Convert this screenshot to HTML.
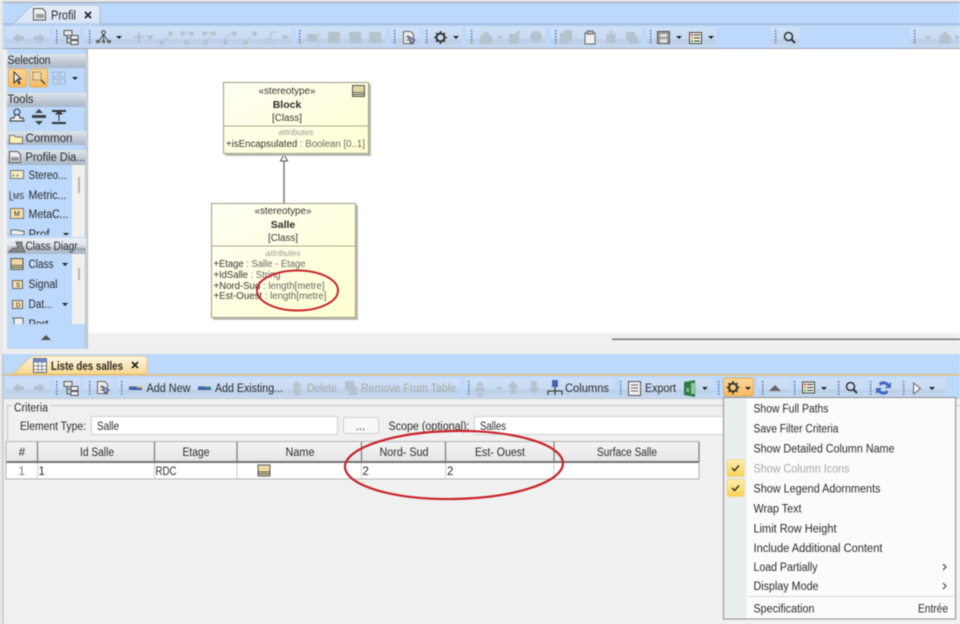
<!DOCTYPE html>
<html><head><meta charset="utf-8"><title>Profil</title>
<style>
html,body{margin:0;padding:0;background:#f0f0f0;width:960px;height:624px;overflow:hidden}
svg{display:block;filter:blur(.5px)}
text{font-family:"Liberation Sans",sans-serif;font-size:11.5px;fill:#2a2a2a}
.d{fill:#a8a8a8}
.s{font-size:10px;fill:#333}
.m{font-size:11.5px}
</style></head><body>
<svg width="960" height="624" viewBox="0 0 960 624" xmlns="http://www.w3.org/2000/svg">
<defs>
<linearGradient id="seg" x1="0" y1="0" x2="0" y2="1"><stop offset="0" stop-color="#cfe0f6"/><stop offset=".55" stop-color="#c8dbf3"/><stop offset=".6" stop-color="#bccee4"/><stop offset="1" stop-color="#c6daf4"/></linearGradient>
<linearGradient id="hdr" x1="0" y1="0" x2="0" y2="1"><stop offset="0" stop-color="#dfe4ea"/><stop offset="1" stop-color="#a9b7c8"/></linearGradient>
<linearGradient id="tab1" x1="0" y1="0" x2="0" y2="1"><stop offset="0" stop-color="#e6eef8"/><stop offset="1" stop-color="#d5e4f7"/></linearGradient>
<linearGradient id="tab2" x1="0" y1="0" x2="0" y2="1"><stop offset="0" stop-color="#fdf6e6"/><stop offset="1" stop-color="#f9d88e"/></linearGradient>
<linearGradient id="org" x1="0" y1="0" x2="0" y2="1"><stop offset="0" stop-color="#fdd79a"/><stop offset="1" stop-color="#f8b95f"/></linearGradient>
<linearGradient id="chk" x1="0" y1="0" x2="0" y2="1"><stop offset="0" stop-color="#fff0b0"/><stop offset="1" stop-color="#fdd050"/></linearGradient>
<linearGradient id="cls" x1="0" y1="0" x2="1" y2="1"><stop offset="0" stop-color="#fffff4"/><stop offset="1" stop-color="#ffffd0"/></linearGradient>
<linearGradient id="th" x1="0" y1="0" x2="0" y2="1"><stop offset="0" stop-color="#f4f4f4"/><stop offset="1" stop-color="#e6e6e6"/></linearGradient>
<g id="grip" fill="#4a78b8"><rect x="0" y="0" width="1.4" height="1.6"/><rect x="0" y="3" width="1.4" height="1.6"/><rect x="0" y="6" width="1.4" height="1.6"/><rect x="0" y="9" width="1.4" height="1.6"/><rect x="0" y="12" width="1.4" height="1.6"/></g>
<path id="dd" d="M0 0h6l-3 3z" fill="#222"/>
<path id="ddg" d="M0 0h6l-3 3z" fill="#b0bac5"/>
<g id="arrows" fill="#b4bfcb"><path d="M0 6l6-5v3h5v4h-5v3z"/><path d="M32 6l-6-5v3h-5v4h5v3z"/></g>
<g id="tree" fill="none" stroke="#555"><rect x="0" y=".5" width="8" height="5" fill="#e8e8e8"/><rect x="7" y="5.5" width="7" height="4" fill="#eee"/><rect x="7" y="10.5" width="7" height="4" fill="#eee"/><path d="M3 6v7h4M3 8h4"/></g>
<g id="gear"><circle cx="6.5" cy="6.5" r="4" fill="none" stroke="#333" stroke-width="2"/><path d="M6.500 0v2M6.500 11v2M0 6.500h2M11 6.500h2M2 2l1.500 1.500M9.500 9.500l1.500 1.500M11 2l-1.500 1.500M3.500 9.500l-1.500 1.500" stroke="#333" stroke-width="1.500"/></g>
<g id="list"><rect x=".5" y=".5" width="12" height="11" fill="#f4f4ea" stroke="#444"/><path d="M5 3h6M5 6h6M5 9h6" stroke="#333"/><rect x="2" y="2" width="2" height="2" fill="#d44"/><rect x="2" y="5" width="2" height="2" fill="#da3"/><rect x="2" y="8" width="2" height="2" fill="#6a4"/></g>
<g id="lens"><circle cx="5.5" cy="5.5" r="4" fill="none" stroke="#333" stroke-width="1.5"/><path d="M8.5 8.5l3.5 3.5" stroke="#333" stroke-width="2"/></g>
<g id="doc"><path d="M.5.5h7l3 3v9h-10z" fill="#eee" stroke="#666"/><path d="M3 6l4 0M3 9h4" stroke="#666"/><path d="M5 5l7 4-4 4z" fill="#8aa6c8" stroke="#556"/></g>
<g id="clsicon"><rect x=".5" y=".5" width="12" height="11" fill="#f0d9a0" stroke="#555"/><path d="M1 7.5h11M1 9.5h11" stroke="#555"/></g>
</defs>

<!-- top region -->
<rect x="0" y="0" width="960" height="2" fill="#e4e4e4"/>
<rect x="0" y="2" width="960" height="1.5" fill="#9aa3ad"/>
<rect x="0" y="0" width="3" height="350" fill="#e8e8e8"/>
<rect x="3" y="3" width="957" height="22" fill="#bcd8fb"/>
<path d="M12 24C20 20 28 5 36 5H96Q100 5 100 9V24Z" fill="url(#tab1)" stroke="#a5b6ca" stroke-width=".8"/>
<rect x="3" y="23.5" width="9" height="1.2" fill="#9db0c6"/><rect x="100" y="23.5" width="860" height="1.2" fill="#9db0c6"/>
<path d="M33.500 8.500h9l3 3v8.500h-12z" fill="#eee" stroke="#555"/><rect x="36" y="14" width="8" height="4" fill="#999"/>
<text x="51" y="19.500" style="font-size:12.500px" textLength="25" lengthAdjust="spacingAndGlyphs">Profil</text>
<path d="M85 12l6 6M91 12l-6 6" stroke="#222" stroke-width="1.800"/>

<rect x="3" y="25" width="957" height="24" fill="#bcd8fb"/>
<rect x="3" y="48" width="957" height="1.500" fill="#9ba5b0"/>
<g fill="url(#seg)">
<rect x="6" y="27" width="44" height="21"/><rect x="53" y="27" width="27" height="21"/><rect x="84" y="27" width="208" height="21"/><rect x="295" y="27" width="91" height="21"/><rect x="391" y="27" width="29" height="21"/><rect x="423" y="27" width="39" height="21"/><rect x="466" y="27" width="80" height="21"/><rect x="551" y="27" width="90" height="21"/><rect x="646" y="27" width="70" height="21"/><rect x="771" y="27" width="29" height="21"/><rect x="910" y="27" width="50" height="21"/>
</g>
<use href="#grip" x="56" y="30"/><use href="#grip" x="89" y="30"/><use href="#grip" x="299" y="30"/><use href="#grip" x="394" y="30"/><use href="#grip" x="426" y="30"/><use href="#grip" x="471" y="30"/><use href="#grip" x="555" y="30"/><use href="#grip" x="650" y="30"/><use href="#grip" x="775" y="30"/><use href="#grip" x="914" y="30"/>
<use href="#arrows" x="13" y="32"/>
<use href="#tree" x="64" y="30"/>
<g fill="none" stroke="#444"><circle cx="103.500" cy="32.500" r="1.800"/><path d="M103.500 34.500l-5 7M103.500 34.500l5 7M103.500 34.500v7"/></g><g fill="#666"><rect x="96" y="40" width="4" height="3"/><rect x="102" y="40" width="3" height="3"/><rect x="107" y="40" width="4" height="3"/></g>
<use href="#dd" x="116" y="36"/>
<g stroke="#b6c0cb" fill="#b6c0cb">
<path d="M134 37h10M139 32v11" stroke-width="2"/><use href="#ddg" x="147" y="36"/>
<path d="M161 43l10-9" /><rect x="160" y="41" width="3" height="3"/><rect x="169" y="32" width="3" height="3"/>
<path d="M183 33h8" fill="none"/><rect x="181" y="32" width="3" height="3"/><rect x="190" y="32" width="3" height="3"/><rect x="185" y="41" width="3" height="3"/>
<path d="M204 33h9l-7 9" fill="none"/><rect x="203" y="32" width="3" height="3"/><rect x="212" y="32" width="3" height="3"/><rect x="204" y="41" width="3" height="3"/>
<path d="M225 42q0-8 9-9" fill="none"/><rect x="224" y="41" width="3" height="3"/><rect x="233" y="32" width="3" height="3"/>
<path d="M245 43l10-10" stroke-dasharray="3 2"/><rect x="244" y="41" width="3" height="3"/><rect x="253" y="32" width="3" height="3"/>
<path d="M265 43h10M265 39h6v-7h6" fill="none"/><use href="#ddg" x="282" y="36"/>
</g>
<g fill="#b6c2ce"><rect x="307" y="34" width="10" height="8"/><path d="M319 31v14" stroke="#b6c2ce" stroke-dasharray="2 2"/><rect x="328" y="32" width="12" height="11"/><rect x="349" y="32" width="12" height="11"/><rect x="369" y="32" width="12" height="11"/></g>
<use href="#doc" x="403" y="31"/>
<use href="#gear" x="434" y="31"/><use href="#dd" x="453" y="36"/>
<g fill="#b6c2ce"><path d="M480 37l6-6 6 6v7h-12z"/><use href="#ddg" x="497" y="36"/><rect x="509" y="34" width="10" height="10"/><path d="M514 34l6-4 1 3z"/><circle cx="536" cy="37" r="6"/><path d="M560 33h9v11h-9zM564 30h8v11h-8z"/><rect x="585" y="33" width="10" height="11" fill="#eef0f2" stroke="#666"/><rect x="587" y="31" width="6" height="3" fill="#bbb" stroke="#666"/><path d="M606 34h10l-1 9h-8zM609 31h4v2h-4z"/><rect x="626" y="32" width="9" height="8"/><rect x="629" y="36" width="9" height="8"/></g>
<rect x="657.500" y="31.500" width="12" height="12" fill="#9a9a9a" stroke="#555"/><path d="M660 34h7v3h-7zM660 39h7v4h-7z" fill="#e0e0e0"/><use href="#dd" x="676" y="36"/>
<use href="#list" x="689" y="32"/><use href="#dd" x="708" y="36"/>
<use href="#lens" x="783" y="31"/>
<g><use href="#ddg" x="925" y="36"/><path d="M939 37l6-6 6 6v7h-12z" fill="#b6c2ce"/><use href="#ddg" x="954" y="36"/></g>

<!-- main canvas -->
<rect x="85" y="49" width="3" height="300" fill="#aeb8c3"/>
<rect x="86" y="49" width="1" height="300" fill="#ddd"/>
<rect x="88" y="49" width="872" height="284" fill="#fff"/>
<rect x="88" y="333" width="872" height="16" fill="#f0f0f0"/>
<rect x="612" y="338.500" width="348" height="1.500" fill="#77797c"/>

<!-- palette -->
<rect x="3" y="49" width="4" height="300" fill="#f0f0f0"/>
<rect x="7" y="49" width="78" height="300" fill="#bcd8fb"/>
<rect x="7" y="54" width="79" height="14" fill="url(#hdr)"/>
<text x="7.500" y="64" textLength="43" lengthAdjust="spacingAndGlyphs">Selection</text>
<rect x="8.500" y="69" width="18" height="18" rx="2" fill="url(#org)" stroke="#e5ad55"/>
<path d="M14 72v11l3-3 2 4 1-1-2-4h3z" fill="#eee" stroke="#333"/>
<rect x="29.500" y="69" width="18" height="18" rx="2" fill="url(#org)" stroke="#e5ad55"/>
<rect x="33" y="72" width="8" height="8" fill="#f4d5a0" stroke="#777" stroke-dasharray="2 1"/><path d="M41 80l4 4" stroke="#444" stroke-width="1.500"/>
<rect x="53" y="72" width="5" height="5" fill="none" stroke="#99a3ae" stroke-dasharray="2 1"/><rect x="60" y="72" width="5" height="5" fill="none" stroke="#99a3ae" stroke-dasharray="2 1"/><rect x="53" y="79" width="5" height="5" fill="none" stroke="#99a3ae" stroke-dasharray="2 1"/><rect x="60" y="79" width="5" height="5" fill="none" stroke="#99a3ae" stroke-dasharray="2 1"/>
<use href="#dd" x="72" y="77"/>
<rect x="7" y="93" width="79" height="14" fill="url(#hdr)"/>
<text x="7.500" y="103" textLength="26" lengthAdjust="spacingAndGlyphs">Tools</text>
<g fill="none" stroke="#333"><circle cx="17" cy="112" r="3"/><path d="M15 115l-1 3h-3l-1 3h14l-1-3h-3l-1-3z" fill="#eee"/></g>
<g fill="#444"><rect x="32" y="115" width="14" height="3"/><path d="M39 109l-4 4h8zM39 125l-4-4h8z"/></g>
<g fill="none" stroke="#333"><path d="M52 111h14M52 123h14" stroke-width="2"/><path d="M59 112v9" /><path d="M56 114h6l-3-3z" fill="#444"/></g>
<rect x="7" y="131" width="79" height="14" fill="url(#hdr)"/>
<path d="M9.500 135.500h5l1 1.500h7v6.500h-13z" fill="#fbeeb4" stroke="#777"/>
<text x="25.500" y="142" textLength="47" lengthAdjust="spacingAndGlyphs">Common</text>
<rect x="7" y="150" width="79" height="15" fill="url(#hdr)"/>
<path d="M9.500 151.500h8l3 3v8h-11z" fill="#eee" stroke="#555"/><rect x="11" y="157" width="8" height="4" fill="#999"/>
<text x="25.500" y="161" textLength="60" lengthAdjust="spacingAndGlyphs">Profile Dia...</text>
<rect x="72" y="165" width="13" height="72" fill="#f0f0f0"/>
<rect x="78" y="177" width="2" height="16" fill="#b5b5b5"/>
<rect x="10.500" y="170.500" width="13" height="8" fill="#f4efc4" stroke="#777"/><text x="12" y="177" style="font-size:5px">« »</text>
<text x="28.500" y="179" textLength="38" lengthAdjust="spacingAndGlyphs">Stereo...</text>
<path d="M10 191v9h3" fill="none" stroke="#555"/><text x="13" y="199" style="font-size:8px" textLength="11" lengthAdjust="spacingAndGlyphs">MS</text>
<text x="28.500" y="199" textLength="38" lengthAdjust="spacingAndGlyphs">Metric...</text>
<rect x="10.500" y="208.500" width="13" height="10" fill="#f5dfaa" stroke="#777"/><text x="14" y="216" style="font-size:7px">M</text>
<text x="28.500" y="218" textLength="40" lengthAdjust="spacingAndGlyphs">MetaC...</text>
<path d="M11 230h7l2 1h4v4h-13z" fill="#eee" stroke="#666"/>
<text x="28.500" y="238" textLength="21" lengthAdjust="spacingAndGlyphs">Prof</text><use href="#dd" x="63" y="233"/>
<rect x="7" y="235" width="65" height="3" fill="#bcd8fb"/>
<rect x="7" y="238" width="79" height="16" fill="url(#hdr)"/>
<rect x="7" y="238" width="79" height="8" fill="#fff" opacity=".45"/>
<path d="M9 252l4-4h5l-2-6h6v4l3 6z" fill="#888" stroke="#666"/>
<text x="25.500" y="250" textLength="60" lengthAdjust="spacingAndGlyphs">Class Diagr...</text>
<rect x="72" y="254" width="13" height="71" fill="#f0f0f0"/>
<rect x="78" y="268" width="2" height="12" fill="#b5b5b5"/>
<use href="#clsicon" x="10.500" y="258"/>
<text x="28.500" y="268" textLength="25" lengthAdjust="spacingAndGlyphs">Class</text><use href="#dd" x="62" y="263"/>
<rect x="12.500" y="280.500" width="10" height="8" fill="#f5dfaa" stroke="#666"/><text x="16" y="287" style="font-size:6px">S</text>
<text x="28.500" y="288" textLength="29" lengthAdjust="spacingAndGlyphs">Signal</text>
<rect x="12.500" y="300.500" width="10" height="8" fill="#f5dfaa" stroke="#666"/><text x="16" y="307" style="font-size:6px">D</text>
<text x="28.500" y="308" textLength="24" lengthAdjust="spacingAndGlyphs">Dat...</text><use href="#dd" x="62" y="303"/>
<path d="M12 318h11v7h-9v-7" fill="#eee" stroke="#666"/>
<text x="28.500" y="328" textLength="20" lengthAdjust="spacingAndGlyphs">Port</text>
<rect x="7" y="324" width="78" height="25" fill="#bcd8fb"/>
<path d="M41 340l5-5 5 5z" fill="#555"/>

<!-- diagram -->
<path d="M284 161V203" stroke="#7d7d7d" stroke-width="1.500"/>
<path d="M284 154.500l3.500 6.500h-7z" fill="#fff" stroke="#555"/>
<rect x="225" y="84" width="146" height="72" fill="#bdbdb5"/>
<rect x="223.500" y="82.500" width="145" height="71" fill="url(#cls)" stroke="#9c9c84"/>
<path d="M224 126h144" stroke="#a9a98a"/>
<text class="s" x="287" y="94" text-anchor="middle" textLength="57" lengthAdjust="spacingAndGlyphs">«stereotype»</text>
<text x="287" y="108" text-anchor="middle" style="font-size:10.500px;font-weight:bold">Block</text>
<text class="s" x="287" y="121" text-anchor="middle" textLength="30" lengthAdjust="spacingAndGlyphs">[Class]</text>
<text x="296" y="135" text-anchor="middle" style="font-size:8.500px;font-style:italic;fill:#999" textLength="35" lengthAdjust="spacingAndGlyphs">attributes</text>
<text class="s" x="226" y="147" textLength="139" lengthAdjust="spacingAndGlyphs">+isEncapsulated <tspan fill="#666">: Boolean [0..1]</tspan></text>
<rect x="352.500" y="85.500" width="12" height="11" fill="#e3d7a3" stroke="#555"/><path d="M353 92.500h11M353 94.500h11" stroke="#666"/>
<rect x="213" y="205" width="145" height="115" fill="#bdbdb5"/>
<rect x="211.500" y="203.500" width="144" height="114" fill="url(#cls)" stroke="#9c9c84"/>
<path d="M212 246h143" stroke="#a9a98a"/>
<text class="s" x="283" y="214" text-anchor="middle" textLength="57" lengthAdjust="spacingAndGlyphs">«stereotype»</text>
<text x="283" y="228" text-anchor="middle" style="font-size:10.500px;font-weight:bold">Salle</text>
<text class="s" x="283" y="241" text-anchor="middle" textLength="30" lengthAdjust="spacingAndGlyphs">[Class]</text>
<text x="283" y="256" text-anchor="middle" style="font-size:8.500px;font-style:italic;fill:#999" textLength="35" lengthAdjust="spacingAndGlyphs">attributes</text>
<text class="s" x="213.500" y="267" textLength="92" lengthAdjust="spacingAndGlyphs">+Etage <tspan fill="#666">: Salle - Etage</tspan></text>
<text class="s" x="213.500" y="278" textLength="67" lengthAdjust="spacingAndGlyphs">+IdSalle <tspan fill="#666">: String</tspan></text>
<text class="s" x="213.500" y="289" textLength="111" lengthAdjust="spacingAndGlyphs">+Nord-Sud <tspan fill="#666">: length[metre]</tspan></text>
<text class="s" x="213.500" y="299" textLength="113" lengthAdjust="spacingAndGlyphs">+Est-Ouest <tspan fill="#666">: length[metre]</tspan></text>
<ellipse cx="297.500" cy="290.500" rx="40.500" ry="20" fill="none" stroke="#c8232b" stroke-width="2"/>

<!-- lower band -->
<rect x="0" y="349" width="960" height="5" fill="#eeeeee"/>
<rect x="3" y="354" width="957" height="21" fill="#bcd8fb"/>
<path d="M12 374C20 370 28 356 36 356H143Q147 356 147 360V374Z" fill="url(#tab2)" stroke="#e9c26f" stroke-width=".8"/>
<rect x="3" y="374" width="957" height="1.500" fill="#e8bd6c"/>
<rect x="33.500" y="358.500" width="13" height="14" fill="#fff" stroke="#666"/><rect x="33.500" y="358.500" width="13" height="4" fill="#6e86c4"/><path d="M38 359v13M42 359v13M34 366h12M34 369.500h12" stroke="#888"/>
<text x="51" y="370" style="font-size:11.500px;font-weight:bold" textLength="72" lengthAdjust="spacingAndGlyphs">Liste des salles</text>
<path d="M132 362l6 6M138 362l-6 6" stroke="#222" stroke-width="1.600"/>

<rect x="3" y="375.500" width="957" height="23" fill="#bcd8fb"/>
<g fill="url(#seg)">
<rect x="6" y="378" width="44" height="20"/><rect x="53" y="378" width="28" height="20"/><rect x="84" y="378" width="29" height="20"/><rect x="117" y="378" width="343" height="20"/><rect x="465" y="378" width="150" height="20"/><rect x="619" y="378" width="95" height="20"/><rect x="758" y="378" width="33" height="20"/><rect x="793" y="378" width="44" height="20"/><rect x="838" y="378" width="28" height="20"/><rect x="868" y="378" width="32" height="20"/><rect x="901" y="378" width="44" height="20"/>
</g>
<rect x="3" y="398" width="957" height="1.200" fill="#c0c6cc"/>
<use href="#grip" x="56" y="381"/><use href="#grip" x="89" y="381"/><use href="#grip" x="121" y="381"/><use href="#grip" x="468" y="381"/><use href="#grip" x="620" y="381"/><use href="#grip" x="718" y="381"/><use href="#grip" x="762" y="381"/><use href="#grip" x="794" y="381"/><use href="#grip" x="838" y="381"/><use href="#grip" x="870" y="381"/><use href="#grip" x="903" y="381"/>
<use href="#arrows" x="13" y="382"/>
<use href="#tree" x="64" y="381"/>
<use href="#doc" x="97" y="381"/>
<rect x="129" y="386.500" width="13" height="3.500" fill="#3f5fa8"/><rect x="137" y="386.500" width="5" height="1.500" fill="#e2b23c"/>
<text x="146.500" y="392" textLength="44" lengthAdjust="spacingAndGlyphs">Add New</text>
<rect x="198" y="386.500" width="13" height="3.500" fill="#3f5fa8"/><rect x="205" y="386.500" width="6" height="1.500" fill="#4d9f6e"/>
<text x="215" y="392" textLength="68" lengthAdjust="spacingAndGlyphs">Add Existing...</text>
<path d="M292 385h10M294 386h6l-1 9h-4zM295 382h4v2h-4z" fill="#b8c3ce" stroke="#b8c3ce"/>
<text class="d" x="307" y="392" textLength="30" lengthAdjust="spacingAndGlyphs">Delete</text>
<path d="M345 381h9v9h-9zM349 386h8v9h-8z" fill="#b6c1cc"/>
<text class="d" x="361" y="392" textLength="95" lengthAdjust="spacingAndGlyphs">Remove From Table</text>
<path d="M476 387h8v5h-8zM480 381l-4 5h8zM480 398l-4-5h8z" fill="#b6c2ce"/><use href="#ddg" x="496" y="387"/>
<path d="M513 381l-6 6h3v7h6v-7h3zM534 394l-6-6h3v-7h6v7h3z" fill="#b6c2ce"/>
<rect x="552" y="380" width="6" height="7" fill="#4763b3"/><path d="M555 387v4M548 395v-4h14v4M555 391v4" fill="none" stroke="#444" stroke-width="1.300"/>
<text x="565" y="392" textLength="44" lengthAdjust="spacingAndGlyphs">Columns</text>
<path d="M628.500 381.500h12v14h-12z" fill="#eee" stroke="#555"/><path d="M631 385h7M631 388h7M631 391h7" stroke="#666"/>
<text x="645" y="392" textLength="31" lengthAdjust="spacingAndGlyphs">Export</text>
<path d="M684 382l11-2v17l-11-2z" fill="#2d7a44"/><rect x="691" y="383" width="5" height="11" fill="#8cc49b"/><text x="686" y="392" style="font-size:7px;fill:#fff">x</text>
<use href="#dd" x="702" y="387"/>
<rect x="723.500" y="378" width="30" height="18" rx="2" fill="url(#org)" stroke="#e3a850"/>
<use href="#gear" x="726.500" y="381"/><use href="#dd" x="745" y="387"/>
<path d="M769 391l6-6 6 6z" fill="#666"/>
<use href="#list" x="802" y="381.500"/><use href="#dd" x="821" y="387"/>
<use href="#lens" x="845" y="381"/>
<path d="M879 383a7 7 0 0 1 10 1l2-2v6h-6l2-2a4.500 4.500 0 0 0-7 0zM888 393a7 7 0 0 1-10-1l-2 2v-6h6l-2 2a4.500 4.500 0 0 0 7 0z" fill="#3f66c4"/>
<path d="M913.500 383l7 5.500-7 5.500z" fill="#f2f6fb" stroke="#666"/>
<use href="#dd" x="929" y="387"/>

<!-- criteria -->
<rect x="3" y="399" width="957" height="225" fill="#f0f0f0"/>
<rect x="0" y="349" width="2.500" height="275" fill="#e6e6e6"/><rect x="2.500" y="354" width="1" height="270" fill="#b6bcc3"/>
<path d="M12 405.500H7.500V440M50 405.500H960" fill="none" stroke="#c4c4c4"/>
<text x="14" y="411.500" textLength="34" lengthAdjust="spacingAndGlyphs">Criteria</text>
<text x="20" y="430" textLength="66" lengthAdjust="spacingAndGlyphs">Element Type:</text>
<rect x="91.500" y="416.500" width="246" height="18" fill="#fff" stroke="#d0d0d0"/>
<text x="97" y="430" textLength="22" lengthAdjust="spacingAndGlyphs">Salle</text>
<rect x="343.500" y="417.500" width="35" height="16" rx="2" fill="#f8f8f8" stroke="#d0d0d0"/>
<text x="360.500" y="430" text-anchor="middle">...</text>
<text x="388.500" y="430" textLength="81" lengthAdjust="spacingAndGlyphs">Scope (optional):</text>
<rect x="474.500" y="416.500" width="260" height="18" fill="#fff" stroke="#d0d0d0"/>
<text x="480" y="430" textLength="26" lengthAdjust="spacingAndGlyphs">Salles</text>

<!-- table -->
<rect x="6" y="441.500" width="693" height="20" fill="url(#th)"/>
<rect x="6" y="461" width="693" height="2" fill="#737373"/>
<rect x="6.500" y="463" width="692.500" height="16" fill="#fff"/>
<path d="M6 441.500H699V479H6Z" fill="none" stroke="#b0b0b0"/>
<g stroke="#7a7a7a" stroke-width="1.200"><path d="M37.500 442v20M154.500 442v20M237 442v20M361.500 442v20M445.500 442v20M554 442v20M699 442v20"/></g>
<g stroke="#cfcfcf"><path d="M37.500 463v16M154.500 463v16M237 463v16M361.500 463v16M445.500 463v16M554 463v16"/></g>
<g text-anchor="middle">
<text x="22" y="456">#</text><text x="97" y="456" textLength="34" lengthAdjust="spacingAndGlyphs">Id Salle</text><text x="196" y="456" textLength="27" lengthAdjust="spacingAndGlyphs">Etage</text><text x="300" y="456" textLength="29" lengthAdjust="spacingAndGlyphs">Name</text><text x="404" y="456" textLength="49" lengthAdjust="spacingAndGlyphs">Nord- Sud</text><text x="500" y="456" textLength="50" lengthAdjust="spacingAndGlyphs">Est- Ouest</text><text x="627" y="456" textLength="60" lengthAdjust="spacingAndGlyphs">Surface Salle</text>
</g>
<text x="18.500" y="475" style="fill:#777">1</text>
<text x="38.500" y="475">1</text><text x="155.500" y="475" textLength="21" lengthAdjust="spacingAndGlyphs">RDC</text>
<use href="#clsicon" x="257.500" y="464.500"/>
<text x="362.500" y="475">2</text><text x="447" y="475">2</text>
<ellipse cx="454" cy="465" rx="109" ry="34" fill="none" stroke="#c8232b" stroke-width="2.200" transform="rotate(-1 454 465)"/>

<!-- menu -->
<rect x="723.500" y="397.500" width="232" height="221.500" fill="#fbfbfb" stroke="#8b8d90"/>
<rect x="724" y="398" width="22.500" height="220.500" fill="#e9eeee"/>
<text class="m" x="753.500" y="412.500" textLength="75" lengthAdjust="spacingAndGlyphs">Show Full Paths</text>
<text class="m" x="753.500" y="432.500" textLength="85" lengthAdjust="spacingAndGlyphs">Save Filter Criteria</text>
<text class="m" x="753.500" y="452.500" textLength="141" lengthAdjust="spacingAndGlyphs">Show Detailed Column Name</text>
<rect x="727" y="459.500" width="17" height="17" rx="1.500" fill="url(#chk)" stroke="#ecd79a"/>
<path d="M732 468l2.500 2.500 4.500-5" fill="none" stroke="#333" stroke-width="1.500"/>
<text class="m d" x="753.500" y="472.500" textLength="96" lengthAdjust="spacingAndGlyphs">Show Column Icons</text>
<rect x="727" y="479.500" width="17" height="17" rx="1.500" fill="url(#chk)" stroke="#ecd79a"/>
<path d="M732 488l2.500 2.500 4.500-5" fill="none" stroke="#333" stroke-width="1.500"/>
<text class="m" x="753.500" y="492.500" textLength="127" lengthAdjust="spacingAndGlyphs">Show Legend Adornments</text>
<text class="m" x="753.500" y="512.500" textLength="48" lengthAdjust="spacingAndGlyphs">Wrap Text</text>
<text class="m" x="753.500" y="532.500" textLength="83" lengthAdjust="spacingAndGlyphs">Limit Row Height</text>
<text class="m" x="753.500" y="552" textLength="129" lengthAdjust="spacingAndGlyphs">Include Additional Content</text>
<text class="m" x="753.500" y="571" textLength="64" lengthAdjust="spacingAndGlyphs">Load Partially</text>
<path d="M943 564l3 3-3 3" fill="none" stroke="#444" stroke-width="1.200"/>
<text class="m" x="753.500" y="590" textLength="65" lengthAdjust="spacingAndGlyphs">Display Mode</text>
<path d="M943 583l3 3-3 3" fill="none" stroke="#444" stroke-width="1.200"/>
<rect x="748" y="596" width="206" height="1" fill="#d5d5d5"/>
<text class="m" x="753.500" y="612.500" textLength="61" lengthAdjust="spacingAndGlyphs">Specification</text>
<text class="m" x="918" y="612.500" textLength="30" lengthAdjust="spacingAndGlyphs">Entrée</text>
</svg>
</body></html>
